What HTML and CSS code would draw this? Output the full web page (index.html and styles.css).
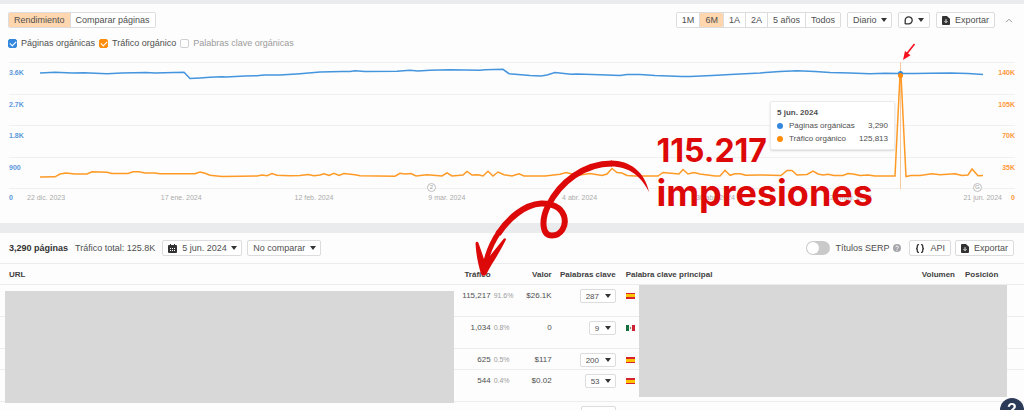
FILE: index.html
```html
<!DOCTYPE html>
<html lang="es">
<head>
    <meta charset="UTF-8">
    <meta name="viewport" content="width=device-width, initial-scale=1.0">
    <title>Páginas principales</title>
    <link rel="stylesheet" href="styles.css">
</head>
<body>
    <svg class="sprite" aria-hidden="true">
        <symbol id="icon-export" viewBox="0 0 9 10">
            <path fill="#333" d="M1 0h4.5L9 3v6a1 1 0 0 1-1 1H1a1 1 0 0 1-1-1V1a1 1 0 0 1 1-1z"/>
            <path fill="none" stroke="#fff" d="M4.500 3.500v3.500M2.800 5.800l1.700 1.700 1.700-1.700"/>
        </symbol>
    </svg>

    <main class="page">
        <section class="card overview">
            <div class="toolbar">
                <div class="segments">
                    <button type="button" class="active">Rendimiento</button>
                    <button type="button">Comparar páginas</button>
                </div>
                <div class="toolbar-right">
                    <div class="segments">
                        <button type="button">1M</button>
                        <button type="button" class="active">6M</button>
                        <button type="button">1A</button>
                        <button type="button">2A</button>
                        <button type="button">5 años</button>
                        <button type="button">Todos</button>
                    </div>
                    <div class="select">
                        <select aria-label="Intervalo"><option>Diario</option></select>
                    </div>
                    <button type="button" class="btn" aria-label="Notas">
                        <svg width="9" height="9" viewBox="0 0 9 9"><path fill="none" stroke="#333" stroke-width="1.300" d="M1.200 8V4.400a3.500 3.500 0 1 1 3.500 3.400H1.200"/></svg>
                        <span class="caret"></span>
                    </button>
                    <button type="button" class="btn"><svg width="8" height="9"><use href="#icon-export"/></svg>Exportar</button>
                    <button type="button" class="collapse" aria-label="Contraer">
                        <svg width="8" height="5" viewBox="0 0 8 5"><path fill="none" stroke="#999" d="M1 4.200l3-3 3 3"/></svg>
                    </button>
                </div>
            </div>

            <div class="legend">
                <label><input type="checkbox" class="blue" checked>Páginas orgánicas</label>
                <label><input type="checkbox" class="orange" checked>Tráfico orgánico</label>
                <label class="off"><input type="checkbox">Palabras clave orgánicas</label>
            </div>

            <div class="chart">
                <div class="grid-row"><span>3.6K</span><span>140K</span></div>
                <div class="grid-row"><span>2.7K</span><span>105K</span></div>
                <div class="grid-row"><span>1.8K</span><span>70K</span></div>
                <div class="grid-row"><span>900</span><span>35K</span></div>
                <div class="axis-row">
                    <span class="zero">0</span>
                    <div class="dates">
                        <span>22 dic. 2023</span>
                        <span>17 ene. 2024</span>
                        <span>12 feb. 2024</span>
                        <span>9 mar. 2024</span>
                        <span>4 abr. 2024</span>
                        <span>30 abr. 2024</span>
                        <span>26 may. 2024</span>
                        <span>21 jun. 2024</span>
                    </div>
                    <span class="zero right">0</span>
                </div>

                <svg class="plot" viewBox="0 62 1024 127" preserveAspectRatio="none">
                    <path class="cursor" d="M900.500 62V189"/>
                    <polyline class="line-blue" points="40,73 55,72.3 72,73 84,72.7 107,73.7 122,73 146,72.5 155,73 184,72.3 190,78.5 200,78 210,77.3 222,76.8 226,77 245,76 257,75.7 264,75 280,75 300,73.7 320,72 342,71.6 350,71.5 355,70.8 365,71.5 397,71.3 410,70.2 418,71 430,70.2 450,69.8 480,70.3 485,69.7 503,69.3 509,73.7 530,75.5 541,76 547,75 555,72.5 571,74.3 577,74 600,74.8 620,75.5 627,74.5 640,74.5 655,75.5 682,76.5 690,76.5 712,75.5 735,74.3 760,73 780,71.5 797,70.7 815,71.5 830,72.5 850,73 870,73.7 885,73.3 900,73.5 915,73.5 930,73.3 950,73 968,73.5 983,74.5"/>
                    <polyline class="line-orange" points="40,177 55,176.8 60,174 66,173 75,174 87,174 92,171.7 107,172.3 112,173.5 128,173.5 133,171.8 139,171.8 145,173 155,173 160,173.7 195,173.7 200,172 205,173.3 210,175.3 222,176.5 240,176.3 257,176 262,175 267,175.7 272,173.5 277,175.3 290,175.8 300,175.5 308,174.5 314,175.7 320,175 324,173.8 329,175.5 334,173.3 339,175.5 344,173.5 355,174.8 360,175.8 395,176.2 400,173.3 405,174 411,173.5 416,176 427,174.8 442,176 447,172.8 452,176 463,175 467,171.5 472,175 478,174.8 483,176 488,171.3 493,176 498,172 504,174.7 512,176 519,173.8 524,176 545,176 560,174.3 566,172.5 572,174 580,175 590,173.5 602,175.5 607,174 612,168.5 617,172.5 622,173 627,175.5 635,176 658,176 663,172.5 668,173 679,174 683,169.5 688,174 694,172.5 700,174 715,176 720,176 725,170.3 730,175.3 735,173.7 740,173.7 746,175.3 760,175 781,175.5 787,170.5 792,170.5 797,175 807,174.5 813,171 818,174 823,175 828,174.3 834,175.5 843,175.5 848,173.5 853,174 860,175.5 868,175 875,176 895,176 900,75 901,75 906,176.5 911,175.5 920,175.5 932,173.7 940,174.7 955,173.7 962,175.5 968,175 972,169 978,175.8 983,175.5"/>
                </svg>
                <span class="point point-blue"></span>
                <span class="point point-orange"></span>
                <span class="event event-notes">2</span>
                <span class="event event-google">G</span>

                <svg class="pointer" width="14" height="18" viewBox="0 0 14 18">
                    <path stroke="#f5121d" stroke-width="1.600" d="M12.500 1L5 10.500"/>
                    <path fill="#f5121d" d="M1 17L3 8l5.500 4.300z"/>
                </svg>

                <div class="tooltip">
                    <strong>5 jun. 2024</strong>
                    <div><i class="dot blue"></i>Páginas orgánicas<b>3,290</b></div>
                    <div><i class="dot orange"></i>Tráfico orgánico<b>125,813</b></div>
                </div>
            </div>
        </section>

        <section class="card pages">
            <div class="toolbar">
                <strong class="count">3,290 páginas</strong>
                <span class="total">Tráfico total: 125.8K</span>
                <div class="select with-icon">
                    <svg width="9" height="9" viewBox="0 0 9 9"><path fill="#333" d="M0 2a1 1 0 0 1 1-1h1V0h1v1h3V0h1v1h1a1 1 0 0 1 1 1v6a1 1 0 0 1-1 1H1a1 1 0 0 1-1-1z"/><path stroke="#fff" stroke-dasharray="1 1" d="M2 4.500h5.500M2 6.500h5.500"/></svg>
                    <select aria-label="Fecha"><option>5 jun. 2024</option></select>
                </div>
                <div class="select">
                    <select aria-label="Comparar"><option>No comparar</option></select>
                </div>
                <div class="toolbar-right">
                    <label class="switch"><input type="checkbox" role="switch">Títulos SERP</label>
                    <svg class="help" width="8" height="8" viewBox="0 0 8 8"><circle cx="4" cy="4" r="4" fill="#a3a5a8"/><path fill="none" stroke="#fff" d="M2.700 3.200a1.300 1.200 0 1 1 1.900 1.100q-.6.300-.6.900M4 5.800v1"/></svg>
                    <button type="button" class="btn">
                        <svg width="10" height="9" viewBox="0 0 10 9"><path fill="none" stroke="#333" stroke-width="1.300" d="M4 .7H3.300Q2.300.7 2.300 1.700v1.500q0 1.300-1.300 1.300 1.300 0 1.300 1.300v1.500q0 1 1 1H4M6 .7h.7q1 0 1 1v1.500q0 1.300 1.300 1.300-1.300 0-1.300 1.300v1.500q0 1-1 1H6"/></svg>API
                    </button>
                    <button type="button" class="btn"><svg width="8" height="9"><use href="#icon-export"/></svg>Exportar</button>
                </div>
            </div>

            <div class="table-wrap">
                <table>
                    <colgroup>
                        <col class="col-url"><col class="col-traffic"><col class="col-share"><col class="col-value">
                        <col class="col-keywords"><col><col class="col-volume"><col class="col-position">
                    </colgroup>
                    <thead>
                        <tr>
                            <th class="url">URL</th>
                            <th class="num traffic">Tráfico</th>
                            <th></th>
                            <th class="num">Valor</th>
                            <th class="num">Palabras clave</th>
                            <th>Palabra clave principal</th>
                            <th class="num">Volumen</th>
                            <th>Posición</th>
                        </tr>
                    </thead>
                    <tbody>
                        <tr class="tall">
                            <td></td>
                            <td class="num traffic">115,217</td>
                            <td class="share">91.6%</td>
                            <td class="num">$26.1K</td>
                            <td class="num"><div class="select small"><select aria-label="Palabras clave"><option>287</option></select></div></td>
                            <td><span class="flag es"></span></td>
                            <td></td>
                            <td></td>
                        </tr>
                        <tr class="tall">
                            <td></td>
                            <td class="num traffic">1,034</td>
                            <td class="share">0.8%</td>
                            <td class="num">0</td>
                            <td class="num"><div class="select small"><select aria-label="Palabras clave"><option>9</option></select></div></td>
                            <td><span class="flag mx"></span></td>
                            <td></td>
                            <td></td>
                        </tr>
                        <tr>
                            <td></td>
                            <td class="num traffic">625</td>
                            <td class="share">0.5%</td>
                            <td class="num">$117</td>
                            <td class="num"><div class="select small"><select aria-label="Palabras clave"><option>200</option></select></div></td>
                            <td><span class="flag es"></span></td>
                            <td></td>
                            <td></td>
                        </tr>
                        <tr class="tall">
                            <td></td>
                            <td class="num traffic">544</td>
                            <td class="share">0.4%</td>
                            <td class="num">$0.02</td>
                            <td class="num"><div class="select small"><select aria-label="Palabras clave"><option>53</option></select></div></td>
                            <td><span class="flag es"></span></td>
                            <td></td>
                            <td></td>
                        </tr>
                        <tr class="tall">
                            <td></td>
                            <td></td>
                            <td></td>
                            <td></td>
                            <td class="num"><div class="select small"><select aria-label="Palabras clave"><option>112</option></select></div></td>
                            <td></td>
                            <td></td>
                            <td></td>
                        </tr>
                    </tbody>
                </table>
                <div class="mask mask-url"></div>
                <div class="mask mask-keyword"></div>
            </div>
        </section>

        <!-- Notes drawn over the report -->
        <svg class="swirl" width="185" height="125" viewBox="470 155 185 125">
            <path fill="#dd0808" d="M649 192C645 172 630 160.500 611 160.500V166.500C629 166.500 641 176 649 192z"/>
            <path fill="none" stroke="#dd0808" stroke-width="6" d="M612 163.500C584 163.500 560 182 548 206C541 220 542 235.500 552 235.500C561 235.500 567 226 564 216C561 207 551 203 541 203.500C524 204.500 508 219 498 234"/>
            <path fill="none" stroke="#dd0808" stroke-width="5" d="M499 232C491 244 485.500 258 484 272"/>
            <path fill="#dd0808" d="M475.500 243q1.500-2.500 3 0L485 262 503.500 239q2-1.500 2.500.5C499 254 492 263 486.500 274q-3 3.500-5.500 0C478 264 476 254 475.500 243z"/>
        </svg>
        <p class="callout"><span class="callout-number">115.217</span><br>impresiones</p>
    </main>

    <button type="button" class="help-badge" aria-label="Ayuda">?</button>
</body>
</html>
```
FILE: styles.css
```css
* {
    box-sizing: border-box;
}
body {
    margin: 0;
    background-color: #e9ebed;
    color: #4f4f4f;
    font-family: "Liberation Sans", Arial, sans-serif;
    font-size: 9px;
    line-height: 12px;
}
button, select, input {
    margin: 0;
    font: inherit;
    color: inherit;
}
.sprite {
    position: absolute;
    width: 0;
    height: 0;
}
.page {
    position: relative;
    height: 100vh;
    padding-top: 4px;
    overflow: hidden;
}
.card {
    background-color: #fdfdfd;
}
.overview {
    padding: 8px 0 21px;
    margin-bottom: 10px;
}

/* Toolbars */
.toolbar {
    display: flex;
    align-items: center;
    padding: 0 11px 0 8px;
    white-space: nowrap;
}
.toolbar-right {
    display: flex;
    align-items: center;
    gap: 6px;
    margin-left: auto;
}
.segments {
    display: flex;
    height: 16px;
    border: 1px solid #dcdcdf;
    border-radius: 2px;
}
.segments button {
    padding: 0 5px;
    border: none;
    border-left: 1px solid #dcdcdf;
    background-color: #fff;
    line-height: 14px;
}
.segments button:first-child {
    border-left: none;
}
.segments .active {
    background-color: #ffd6ad;
}
.btn {
    display: flex;
    align-items: center;
    gap: 5px;
    height: 16px;
    padding: 0 5px;
    border: 1px solid #dcdcdf;
    border-radius: 2px;
    background-color: #fff;
}
.caret, .select::after {
    border: 3px solid transparent;
    border-top: 4px solid #333;
    border-bottom: none;
}
.select {
    position: relative;
    display: inline-flex;
    align-items: center;
    height: 16px;
    border: 1px solid #dcdcdf;
    border-radius: 2px;
    background-color: #fff;
}
.select::after {
    content: "";
    position: absolute;
    right: 4px;
    pointer-events: none;
}
.select select {
    appearance: none;
    height: 14px;
    padding: 0 14px 0 5px;
    border: none;
    background: transparent;
}
.with-icon svg {
    margin-left: 5px;
}
.collapse {
    display: flex;
    margin-left: 4px;
    padding: 0;
    border: none;
    background: none;
}

/* Legend */
.legend {
    display: flex;
    gap: 4px;
    padding: 9px 8px 0;
}
.legend label {
    display: flex;
    align-items: center;
    gap: 4px;
}
.legend .off {
    color: #9b9b9b;
}
.legend input {
    display: flex;
    align-items: center;
    justify-content: center;
    appearance: none;
    width: 9px;
    height: 9px;
    border: 1px solid #d0d0d3;
    border-radius: 2px;
    background-color: #fff;
}
.legend input:checked::before {
    content: "";
    width: 5px;
    height: 3px;
    border: solid #fff;
    border-width: 0 0 1px 1px;
    transform: rotate(-45deg);
}
.legend input.blue {
    border-color: #3388dd;
    background-color: #3388dd;
}
.legend input.orange {
    border-color: #ff8c0a;
    background-color: #ff8c0a;
}

/* Chart */
.chart {
    position: relative;
    display: grid;
    grid-template-rows: 32px 31px 32px 31px auto;
    margin-top: 13px;
    padding: 0 9px;
    font-size: 7px;
    line-height: 9px;
}
.grid-row, .axis-row {
    display: flex;
    justify-content: space-between;
    padding-top: 5px;
    border-top: 1px solid #f0f0f1;
}
.axis-row {
    padding-top: 4px;
}
.grid-row span, .zero {
    color: #5b98dc;
    font-weight: bold;
}
.grid-row span:last-child, .zero.right {
    color: #ff983a;
}
.zero {
    width: 18px;
}
.zero.right {
    width: 13px;
    text-align: right;
}
.dates {
    flex: 1;
    display: grid;
    grid-template-columns: repeat(7, 1fr) auto;
    color: #ababab;
    white-space: nowrap;
}
.plot {
    position: absolute;
    top: 0;
    left: 0;
    width: 100%;
    height: 127px;
}
.plot path, .plot polyline {
    fill: none;
    vector-effect: non-scaling-stroke;
}
.cursor {
    stroke: #f5c9a0;
}
.line-blue {
    stroke: #4495dd;
    stroke-width: 1.5px;
}
.line-orange {
    stroke: #ff9a26;
    stroke-width: 1.5px;
}
.point {
    position: absolute;
    left: 87.9%;
    width: 5px;
    height: 5px;
    margin-left: -2px;
    border-radius: 50%;
}
.point-blue {
    top: 9px;
    background-color: #3388dd;
}
.point-orange {
    top: 11px;
    background-color: #ff8c0a;
}
.event {
    position: absolute;
    top: 121px;
    width: 9px;
    height: 9px;
    border: 1px solid #bdbdbd;
    border-radius: 50%;
    background-color: #fff;
    color: #999;
    font-size: 6px;
    line-height: 7px;
    text-align: center;
}
.event-notes {
    left: 41.7%;
}
.event-google {
    left: 95%;
}
.pointer {
    position: absolute;
    top: -19px;
    left: 88.1%;
}
.tooltip {
    position: absolute;
    top: 39px;
    right: 12.6%;
    width: 125px;
    padding: 4px 6px;
    border: 1px solid #ececee;
    border-radius: 2px;
    background-color: #fff;
    box-shadow: 0 1px 2px rgba(0,0,0,0.15);
    font-size: 8px;
    line-height: 13px;
}
.tooltip div {
    display: flex;
    align-items: center;
}
.tooltip b {
    margin-left: auto;
    font-weight: normal;
}
.dot {
    width: 6px;
    height: 6px;
    margin-right: 6px;
    border-radius: 50%;
}
.dot.blue {
    background-color: #3388dd;
}
.dot.orange {
    background-color: #ff8c0a;
}

/* Pages table */
.pages .toolbar {
    gap: 5px;
    padding: 7px 10px 7px 9px;
}
.count {
    color: #333;
}
.total {
    margin: 0 2px;
}
.pages .toolbar-right {
    gap: 4px;
}
.switch {
    display: flex;
    align-items: center;
    gap: 5px;
}
.switch input {
    display: flex;
    align-items: center;
    appearance: none;
    width: 24px;
    height: 14px;
    padding: 1px;
    border-radius: 7px;
    background-color: #c9c9c9;
}
.switch input::before {
    content: "";
    width: 12px;
    height: 12px;
    border-radius: 50%;
    background-color: #fff;
}
.help {
    margin-right: 4px;
}
.table-wrap {
    position: relative;
}
table {
    width: 100%;
    table-layout: fixed;
    border-collapse: collapse;
    font-size: 8px;
}
.col-url {
    width: 44.4%;
}
.col-traffic {
    width: 38px;
}
.col-share {
    width: 24px;
}
.col-value {
    width: 40px;
}
.col-keywords {
    width: 64px;
}
.col-volume {
    width: 60px;
}
.col-position {
    width: 64px;
}
th, td {
    height: 21px;
    padding: 4px 5px 2px;
    border-top: 1px solid #ececef;
    text-align: left;
    vertical-align: top;
    line-height: 14px;
    white-space: nowrap;
}
th {
    color: #3f3f3f;
}
th.url {
    padding-left: 9px;
}
.tall td {
    height: 32px;
}
.num {
    text-align: right;
}
.traffic {
    padding-left: 0;
    padding-right: 2px;
}
th.num {
    padding-left: 0;
}
td.share {
    padding-left: 1px;
    padding-right: 0;
    color: #9b9b9b;
    font-size: 7px;
}
.small {
    height: 14px;
    vertical-align: top;
}
.small select {
    height: 12px;
    padding-right: 15px;
}
.flag {
    display: block;
    width: 9px;
    height: 6px;
    margin-top: 4px;
}
.flag.es {
    background: linear-gradient(#d8222b 25%, #ffc400 25% 75%, #d8222b 75%);
}
.flag.mx {
    background: radial-gradient(circle, #9a7b4f 1px, transparent 1px), linear-gradient(90deg, #12713f 33%, #f4f4f4 33% 67%, #cf1f30 67%);
}
.mask {
    position: absolute;
    height: 112px;
    background-color: #d8d8d8;
}
.mask-url {
    top: 28px;
    left: 5px;
    width: 43.8%;
}
.mask-keyword {
    top: 22px;
    left: 62.4%;
    right: 17px;
}

/* Overlays */
.swirl {
    position: absolute;
    top: 155px;
    left: 45.9%;
}
.callout {
    position: absolute;
    top: 128px;
    left: 64.1%;
    margin: 0;
    color: #dd0808;
    font-family: Inter, "Liberation Sans", sans-serif;
    font-size: 36px;
    font-weight: bold;
    line-height: 43px;
}
.callout-number {
    font-size: 32px;
}
.help-badge {
    position: fixed;
    right: 0;
    bottom: -12px;
    width: 24px;
    height: 24px;
    padding: 0;
    border: none;
    border-radius: 50%;
    background-color: #2b3a57;
    color: #fff;
    font-size: 16px;
    font-weight: bold;
    line-height: 24px;
}
```
